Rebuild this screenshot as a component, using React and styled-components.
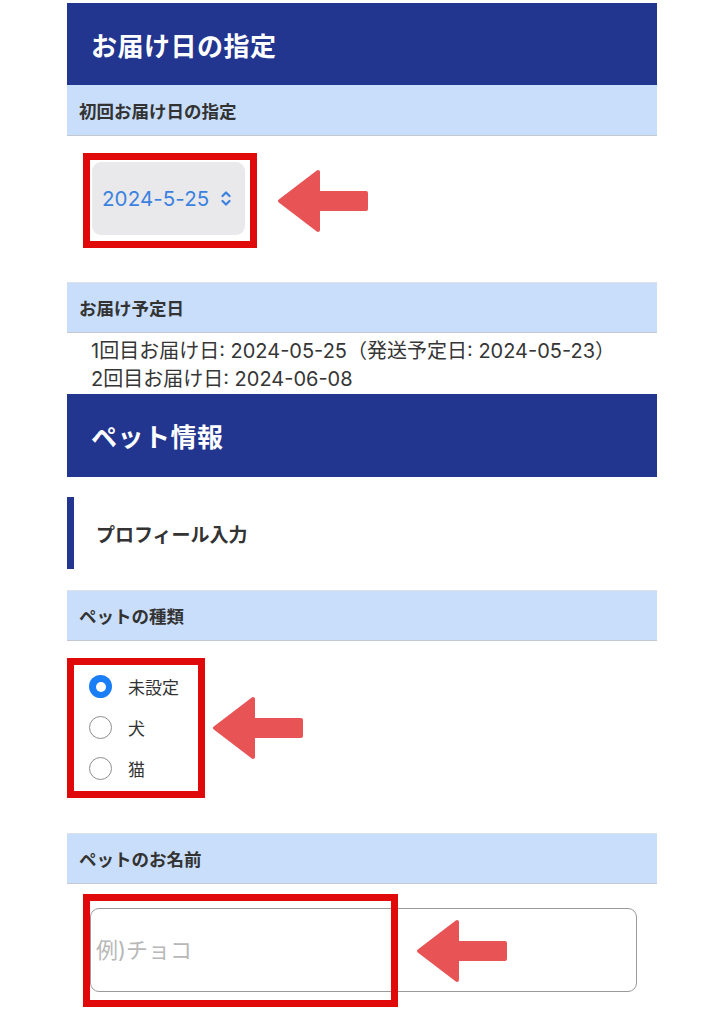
import React from "react";
import styled, { createGlobalStyle } from "styled-components";

const GlobalStyle = createGlobalStyle`
  html, body { margin: 0; padding: 0; background: #ffffff; }
  body { font-family: Inter, "Noto Sans CJK JP", sans-serif; color: #333333; }
  * { box-sizing: border-box; }
`;

const NAVY = "#22358f";
const SKY = "#c9defa";
const MARK = "#e10a0a";
const CORAL = "#e85455";

const Page = styled.div`
  width: 724px;
  padding-top: 3px;
  display: flex;
  justify-content: center;
`;

const Column = styled.div`
  width: 590px;
  display: flex;
  flex-direction: column;
`;

const SectionHeader = styled.h2`
  margin: 0;
  height: ${(p) => p.$h || 82}px;
  display: flex;
  align-items: center;
  padding-left: 24px;
  background: ${NAVY};
  color: #ffffff;
  font-size: 26px;
  font-weight: 700;
  letter-spacing: 0.5px;
`;

const SubHeader = styled.h3`
  margin: 0;
  height: 51px;
  display: flex;
  align-items: center;
  padding-left: 12px;
  background: ${SKY};
  border-bottom: 1px solid #c3c8d1;
  border-top: ${(p) => (p.$top ? "1px solid #dde2ea" : "none")};
  color: #333333;
  font-size: 17.5px;
  font-weight: 700;
`;

const FieldRow = styled.div`
  display: flex;
  align-items: center;
  gap: ${(p) => p.$gap}px;
  padding: ${(p) => p.$pad};
`;

const Highlight = styled.div`
  border: 7px solid ${MARK};
  padding: ${(p) => p.$pad};
`;

const DateSelect = styled.div`
  width: 153px;
  height: 73px;
  border-radius: 9px;
  background: #e9e9eb;
  display: flex;
  align-items: center;
  gap: 12px;
  padding-left: 10px;
  color: #3b82e0;
  font-size: 20.5px;
  letter-spacing: 0.1px;
`;

const DeliveryLines = styled.div`
  padding: 4px 0 1px 24px;
  font-size: 20px;
  line-height: 28px;
  color: #363636;
`;

const Profile = styled.div`
  margin: 20px 0 21px;
  height: 72px;
  display: flex;
  align-items: center;
  border-left: 7px solid ${NAVY};
  padding-left: 22px;
  font-size: 19px;
  font-weight: 700;
  color: #333333;
`;

const RadioList = styled.div`
  width: 124px;
  display: flex;
  flex-direction: column;
`;

const RadioRow = styled.label`
  height: 41px;
  display: flex;
  align-items: center;
  gap: 16px;
  padding-left: 15px;
  font-size: 17px;
  color: #333333;
`;

const RadioDot = styled.span`
  width: 23px;
  height: 23px;
  border-radius: 50%;
  flex: none;
  display: flex;
  align-items: center;
  justify-content: center;
  background: ${(p) => (p.$on ? "#1a7ef6" : "#ffffff")};
  border: ${(p) => (p.$on ? "none" : "1.6px solid #8e8e8e")};
  &::after {
    content: "";
    display: ${(p) => (p.$on ? "block" : "none")};
    width: 10px;
    height: 10px;
    border-radius: 50%;
    background: #ffffff;
  }
`;

const InputRow = styled.div`
  padding: 24px 0 40px 23px;
`;

const InputWrap = styled.div`
  position: relative;
  width: 547px;
  height: 84px;
`;

const TextInput = styled.input`
  width: 100%;
  height: 100%;
  border: 1.5px solid #9a9a9a;
  border-radius: 9px;
  padding: 0 0 0 5px;
  font-family: Inter, "Noto Sans CJK JP", sans-serif;
  font-size: 22px;
  color: #333333;
  background: #ffffff;
  outline: none;
  &::placeholder { color: #b8b8b8; }
`;

const OverlayMark = styled.div`
  position: absolute;
  left: -7px;
  top: -14px;
  width: 315px;
  height: 113px;
  border: 7px solid ${MARK};
  pointer-events: none;
`;

const OverlayArrow = styled.div`
  position: absolute;
  left: 326px;
  top: 11px;
  display: flex;
`;

function Arrow() {
  return (
    <svg width="92" height="64" viewBox="0 0 92 64">
      <path
        d="M3 32 L41 3 L41 24 L89 24 L89 40 L41 40 L41 61 Z"
        fill={CORAL}
        stroke={CORAL}
        strokeWidth="4"
        strokeLinejoin="round"
      />
    </svg>
  );
}

function UpDown() {
  return (
    <svg width="10" height="17" viewBox="0 0 10 17">
      <path
        d="M1.5 6 L5 2.5 L8.5 6 M1.5 11 L5 14.5 L8.5 11"
        fill="none"
        stroke="#3b82e0"
        strokeWidth="2.2"
        strokeLinecap="round"
        strokeLinejoin="round"
      />
    </svg>
  );
}

const petKinds = [
  { label: "未設定", on: true },
  { label: "犬", on: false },
  { label: "猫", on: false },
];

export default function App() {
  return (
    <>
      <GlobalStyle />
      <Page>
        <Column>
          <SectionHeader>お届け日の指定</SectionHeader>
          <SubHeader>初回お届け日の指定</SubHeader>
          <FieldRow $gap={20} $pad="17px 0 34px 16px">
            <Highlight $pad="2px 5px 6px 2px">
              <DateSelect>
                2024-5-25
                <UpDown />
              </DateSelect>
            </Highlight>
            <Arrow />
          </FieldRow>
          <SubHeader $top>お届け予定日</SubHeader>
          <DeliveryLines>
            <div>1回目お届け日: 2024-05-25（発送予定日: 2024-05-23）</div>
            <div>2回目お届け日: 2024-06-08</div>
          </DeliveryLines>
          <SectionHeader $h={83}>ペット情報</SectionHeader>
          <Profile>プロフィール入力</Profile>
          <SubHeader $top>ペットの種類</SubHeader>
          <FieldRow $gap={7} $pad="17px 0 35px 0">
            <Highlight $pad="1px 0 2px 0">
              <RadioList>
                {petKinds.map((k) => (
                  <RadioRow key={k.label}>
                    <RadioDot $on={k.on} />
                    {k.label}
                  </RadioRow>
                ))}
              </RadioList>
            </Highlight>
            <Arrow />
          </FieldRow>
          <SubHeader $top>ペットのお名前</SubHeader>
          <InputRow>
            <InputWrap>
              <TextInput placeholder="例)チョコ" />
              <OverlayMark />
              <OverlayArrow>
                <Arrow />
              </OverlayArrow>
            </InputWrap>
          </InputRow>
        </Column>
      </Page>
    </>
  );
}
